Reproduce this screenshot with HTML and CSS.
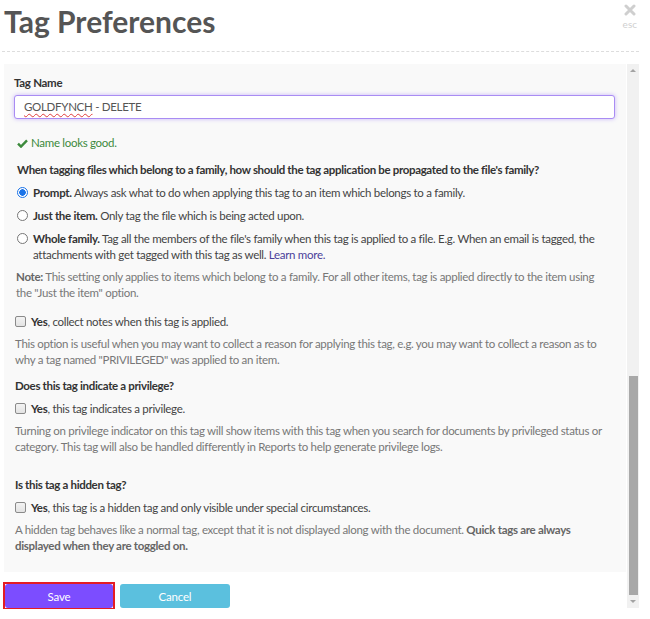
FILE: index.html
```html
<!DOCTYPE html>
<html>
<head>
<meta charset="utf-8">
<link rel="stylesheet" href="styles.css">
</head>
<body>
<div class="modal">
  <div class="header">
    <h1 class="title">Tag Preferences</h1>
    <div class="close">
      <svg class="close-x" width="12" height="12" viewBox="0 0 12 12"><path d="M2 2 L10 10 M10 2 L2 10" stroke="#cfcfcf" stroke-width="3" stroke-linecap="round"/></svg>
      <span class="esc">esc</span>
    </div>
  </div>
  <div class="divider"></div>
  <div class="body">
    <div class="scroll">
      <div class="panel">
        <div class="label">Tag Name</div>
        <div class="input"><span class="spell">GOLDFYNCH</span> - DELETE</div>
        <div class="valid"><svg width="11" height="9" viewBox="0 0 11 9"><path d="M1 4.6 L4 7.6 L10 1.4" fill="none" stroke="#3c8a3c" stroke-width="2.4"/></svg>Name looks good.</div>
        <div class="question">When tagging files which belong to a family, how should the tag application be propagated to the file's family?</div>
        <div class="option"><span class="radio checked"></span><div><b>Prompt.</b> Always ask what to do when applying this tag to an item which belongs to a family.</div></div>
        <div class="option"><span class="radio"></span><div><b>Just the item.</b> Only tag the file which is being acted upon.</div></div>
        <div class="option wide"><span class="radio"></span><div><b>Whole family.</b> Tag all the members of the file's family when this tag is applied to a file. E.g. When an email is tagged, the attachments with get tagged with this tag as well. <span class="link">Learn more.</span></div></div>
        <p class="help note"><b>Note:</b> This setting only applies to items which belong to a family. For all other items, tag is applied directly to the item using the "Just the item" option.</p>
        <div class="check first"><span class="box"></span><div><b>Yes</b>, collect notes when this tag is applied.</div></div>
        <p class="help">This option is useful when you may want to collect a reason for applying this tag, e.g. you may want to collect a reason as to why a tag named "PRIVILEGED" was applied to an item.</p>
        <div class="question q2">Does this tag indicate a privilege?</div>
        <div class="check"><span class="box"></span><div><b>Yes</b>, this tag indicates a privilege.</div></div>
        <p class="help">Turning on privilege indicator on this tag will show items with this tag when you search for documents by privileged status or category. This tag will also be handled differently in Reports to help generate privilege logs.</p>
        <div class="question q3">Is this tag a hidden tag?</div>
        <div class="check"><span class="box"></span><div><b>Yes</b>, this tag is a hidden tag and only visible under special circumstances.</div></div>
        <p class="help">A hidden tag behaves like a normal tag, except that it is not displayed along with the document. <b>Quick tags are always displayed when they are toggled on.</b></p>
      </div>
      <div class="actions">
        <span class="focus-ring"><button class="btn save">Save</button></span>
        <button class="btn cancel">Cancel</button>
      </div>
    </div>
    <div class="scrollbar">
      <span class="arrow up"></span>
      <div class="track"><div class="thumb"></div></div>
      <span class="arrow down"></span>
    </div>
  </div>
</div>
</body>
</html>
```
FILE: styles.css
```css
* { box-sizing: border-box; }
body {
  margin: 0;
  background: #fff;
  font-family: Lato, "Open Sans", Arial, sans-serif;
  font-size: 11.5px;
  letter-spacing: -0.3px;
  color: #444;
}
.modal { width: 650px; }
.header {
  display: flex;
  justify-content: space-between;
  align-items: flex-start;
  height: 51px;
  padding: 0 13px 0 4px;
}
.title {
  margin: 0;
  padding-top: 2px;
  font-size: 30px;
  line-height: 38px;
  font-weight: 700;
  letter-spacing: 0;
  color: #555;
}
.close {
  display: flex;
  flex-direction: column;
  align-items: center;
  padding-top: 4px;
}
.close-x { display: block; }
.esc {
  font-size: 10px;
  line-height: 12px;
  letter-spacing: 0;
  color: #d0d0d0;
  margin-top: 2px;
}
.divider {
  margin: 0 11px 12px 2px;
  border-top: 1px dashed #ddd;
}
.body {
  display: flex;
  height: 545px;
  padding-right: 11px;
}
.scroll {
  flex: 1;
  padding-left: 4px;
}
.panel {
  background: #f9f9f9;
  padding: 11px 11px 17px 10px;
  height: 508px;
  margin-right: 1px;
}
.label {
  font-weight: 700;
  color: #333;
  line-height: 16px;
}
.input {
  margin-top: 4px;
  height: 24px;
  line-height: 22px;
  border: 1px solid #a98cf3;
  border-radius: 3px;
  background: #fff;
  box-shadow: 0 0 4px rgba(140, 100, 250, 0.45);
  padding-left: 9px;
  color: #555;
}
.spell {
  text-decoration: underline wavy #e03c3c;
  text-decoration-thickness: 1px;
  text-underline-offset: 2px;
}
.valid {
  margin-top: 16px;
  padding-left: 3px;
  line-height: 16px;
  color: #3c8a3c;
  display: flex;
  align-items: center;
  gap: 3px;
}
.question {
  margin-top: 11px;
  padding-left: 3px;
  font-weight: 700;
  letter-spacing: -0.34px;
  color: #333;
  line-height: 16px;
}
.q2 { margin-top: 10px; padding-left: 1px; }
.q3 { margin-top: 22px; padding-left: 1px; }
.option {
  display: flex;
  align-items: flex-start;
  margin-top: 7px;
  padding-left: 3px;
  line-height: 16px;
  color: #444;
}
.option b { color: #333; }
.radio {
  flex: none;
  width: 11px;
  height: 11px;
  border-radius: 50%;
  border: 1px solid #777;
  background: #fff;
  margin: 2px 5px 0 0;
}
.radio.checked {
  border: 1px solid #1a73e8;
  background: radial-gradient(circle, #1a73e8 0 3px, #fff 3.5px);
}
.link { color: #4a3f9a; }
.help {
  margin: 6px 0 0;
  padding-left: 1px;
  line-height: 16px;
  color: #777;
}
.note { padding-left: 2px; padding-right: 10px; }
.help b { color: #666; }
.check {
  display: flex;
  align-items: flex-start;
  margin-top: 7px;
  padding-left: 1px;
  line-height: 16px;
  color: #444;
}
.check.first { margin-top: 13px; }
.check b { color: #333; }
.box {
  flex: none;
  width: 11px;
  height: 11px;
  border: 1px solid #8a8a8a;
  border-radius: 2px;
  background: linear-gradient(#f3f3f3, #e3e3e3);
  margin: 2px 5px 0 0;
}
.actions {
  display: flex;
  align-items: center;
  gap: 5px;
  margin-top: 10px;
  margin-left: -1px;
}
.focus-ring {
  display: flex;
  border: 2px solid #e41c24;
}
.btn {
  height: 24px;
  border: none;
  border-radius: 3px;
  color: #fff;
  font-family: Lato, Arial, sans-serif;
  font-size: 11.5px;
  letter-spacing: -0.2px;
  padding: 0;
}
.save {
  width: 108px;
  background: #7c4dff;
}
.cancel {
  width: 110px;
  background: #5bc0de;
}
.scrollbar {
  width: 12px;
  height: 544px;
  background: #f1f1f1;
  display: flex;
  flex-direction: column;
  align-items: center;
}
.arrow {
  width: 0;
  height: 0;
  border-left: 3px solid transparent;
  border-right: 3px solid transparent;
  margin: 5px 0;
}
.arrow.up { border-bottom: 3px solid #a3a3a3; }
.arrow.down { border-top: 3px solid #a3a3a3; }
.track {
  flex: 1;
  width: 100%;
  display: flex;
  flex-direction: column;
  justify-content: flex-end;
  align-items: center;
}
.thumb {
  width: 9px;
  height: 219px;
  background: #a8a8a8;
}
```
